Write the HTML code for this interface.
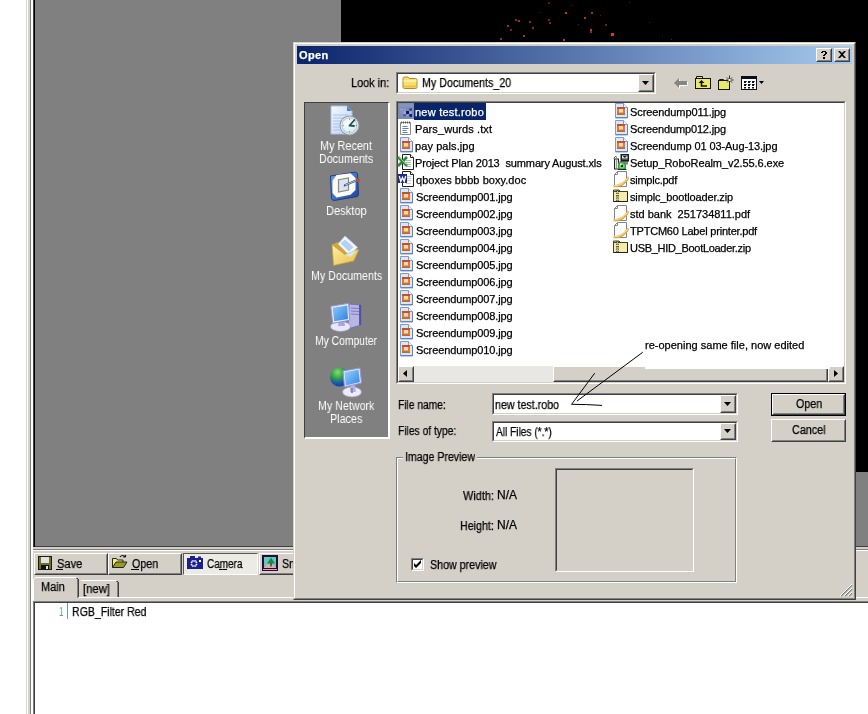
<!DOCTYPE html>
<html><head><meta charset="utf-8"><title>Open</title>
<style>
html,body{margin:0;padding:0;}
body{width:868px;height:714px;overflow:hidden;background:#fff;position:relative;font-family:"Liberation Sans",sans-serif;font-size:11px;color:#000;}
.a{position:absolute;}
svg.a{overflow:visible;}
.t{position:absolute;white-space:nowrap;line-height:13px;height:13px;will-change:transform;-webkit-text-stroke:0.25px;}
.face{background:#d4d0c8;}
.btn{position:absolute;background:#d4d0c8;box-sizing:border-box;border:1px solid;border-color:#fff #404040 #404040 #fff;}
.btn:before{content:"";position:absolute;left:0;top:0;right:0;bottom:0;border:1px solid;border-color:#d4d0c8 #808080 #808080 #d4d0c8;}
.sunk{position:absolute;box-sizing:border-box;border:1px solid;border-color:#808080 #fff #fff #808080;background:#fff;}
.sunk:before{content:"";position:absolute;left:0;top:0;right:0;bottom:0;border:1px solid;border-color:#404040 #d4d0c8 #d4d0c8 #404040;}
.dith{background:#e9e7e3;}
u{text-decoration:none;border-bottom:1px solid #000;}
</style></head><body>
<div class="a" style="left:26px;top:0px;width:1px;height:714px;background:#d8d8d0;"></div>
<div class="a" style="left:28px;top:0px;width:2px;height:714px;background:#d4d0c8;"></div>
<div class="a" style="left:30px;top:0px;width:1px;height:714px;background:#808080;"></div>
<div class="a" style="left:33px;top:0px;width:835px;height:546px;background:#808080;"></div>
<div class="a" style="left:33px;top:0px;width:1px;height:547px;background:#404040;"></div>
<div class="a" style="left:34px;top:0px;width:1px;height:547px;background:#000;"></div>
<div class="a" style="left:341px;top:0px;width:527px;height:472px;background:#000;"></div>
<div class="a" style="left:35px;top:546px;width:833px;height:1px;background:#404040;"></div>
<div class="a" style="left:565px;top:12px;width:2px;height:2px;background:#c03828;"></div>
<div class="a" style="left:591px;top:12px;width:2px;height:2px;background:#a83020;"></div>
<div class="a" style="left:584px;top:17px;width:2px;height:2px;background:#b03424;"></div>
<div class="a" style="left:590px;top:29px;width:2px;height:2px;background:#c03828;"></div>
<div class="a" style="left:590px;top:31px;width:2px;height:2px;background:#902818;"></div>
<div class="a" style="left:611px;top:33px;width:3px;height:3px;background:#d04030;"></div>
<div class="a" style="left:515px;top:19px;width:2px;height:2px;background:#902818;"></div>
<div class="a" style="left:518px;top:20px;width:2px;height:2px;background:#a03020;"></div>
<div class="a" style="left:507px;top:25px;width:2px;height:2px;background:#a03020;"></div>
<div class="a" style="left:510px;top:29px;width:2px;height:2px;background:#802010;"></div>
<div class="a" style="left:529px;top:21px;width:2px;height:2px;background:#902818;"></div>
<div class="a" style="left:532px;top:27px;width:2px;height:2px;background:#902818;"></div>
<div class="a" style="left:548px;top:19px;width:2px;height:2px;background:#802010;"></div>
<div class="a" style="left:549px;top:22px;width:2px;height:2px;background:#802010;"></div>
<div class="a" style="left:523px;top:35px;width:2px;height:2px;background:#a04020;"></div>
<div class="a" style="left:500px;top:38px;width:2px;height:2px;background:#903020;"></div>
<div class="a" style="left:563px;top:39px;width:2px;height:2px;background:#a04828;"></div>
<div class="a" style="left:548px;top:2px;width:2px;height:2px;background:#601808;"></div>
<div class="a" style="left:605px;top:24px;width:2px;height:2px;background:#702010;"></div>
<div class="a" style="left:629px;top:2px;width:1px;height:1px;background:#501808;"></div>
<div class="a" style="left:671px;top:39px;width:1px;height:1px;background:#602010;"></div>
<div class="a" style="left:662px;top:36px;width:1px;height:1px;background:#501808;"></div>
<div class="a" style="left:649px;top:22px;width:1px;height:1px;background:#501808;"></div>
<div class="a" style="left:571px;top:5px;width:1px;height:1px;background:#601808;"></div>
<div class="a" style="left:540px;top:12px;width:1px;height:1px;background:#501808;"></div>
<div class="a" style="left:600px;top:15px;width:1px;height:1px;background:#601808;"></div>
<div class="a" style="left:578px;top:24px;width:1px;height:1px;background:#601808;"></div>
<div class="a" style="left:33px;top:547px;width:835px;height:54px;background:#d4d0c8;"></div>
<div class="a" style="left:33px;top:549px;width:835px;height:1px;background:#808080;"></div>
<div class="a" style="left:33px;top:550px;width:835px;height:1px;background:#fff;"></div>
<div class="btn" style="left:34px;top:553px;width:74px;height:22px"></div>
<div class="btn" style="left:108px;top:553px;width:74px;height:22px"></div>
<div class="a" style="left:183px;top:553px;width:75px;height:22px;box-sizing:border-box;background:#edebe6;border:1px solid;border-color:#585858 #fff #fff #585858;"></div>
<div class="btn" style="left:259px;top:553px;width:74px;height:22px"></div>
<svg class="a" style="left:38px;top:555px;" width="16" height="16" viewBox="0 0 16 16"><rect x="0" y="1" width="14" height="14" fill="#1a1a1a"/><rect x="1" y="2" width="12" height="12" fill="#6d7224"/><rect x="3" y="2" width="8" height="6" fill="#e4e2dc"/><rect x="3" y="10" width="8" height="4" fill="#111"/><rect x="8" y="11" width="2" height="3" fill="#e4e2dc"/></svg>
<svg class="a" style="left:112px;top:554px;" width="16" height="16" viewBox="0 0 16 16"><path d="M.5 13.500v-9h4l1 1.500h5.500v2" fill="#f4ee7a" stroke="#222"/><path d="M.5 13.500l3.500-5.500h11l-3.500 5.500z" fill="#9a9c22" stroke="#222"/><path d="M8 3c1.500-2 4-2 5.500 0M13.500 3v-2M13.500 3h-2.300" fill="none" stroke="#111" stroke-width="1.100"/></svg>
<svg class="a" style="left:187px;top:555px;" width="16" height="16" viewBox="0 0 16 16"><rect x="0" y="3" width="16" height="11" fill="#1c1f8c"/><rect x="3" y="1" width="5" height="3" fill="#1c1f8c"/><rect x="11" y="1.500" width="3" height="2" fill="#1c1f8c"/><circle cx="7" cy="8.500" r="3.400" fill="#fff"/><circle cx="7" cy="8.500" r="1.700" fill="#1c1f8c"/><path d="M7 4.500v8M3 8.500h8M4.200 5.700l5.600 5.600M9.800 5.700l-5.600 5.600" stroke="#1c1f8c" stroke-width=".8"/><rect x="12" y="5" width="2" height="2" fill="#fff"/></svg>
<svg class="a" style="left:262px;top:555px;" width="16" height="16" viewBox="0 0 16 16"><rect x="0" y="0" width="16" height="16" fill="#2a0a30"/><rect x="2" y="2" width="12" height="11" fill="#5ec9c4"/><path d="M2 13l4-5 3 3 2-2 3 4z" fill="#e7a9a0"/><path d="M9 2.500l4 6h-8z" fill="#1e8a3c"/><rect x="8.300" y="8" width="1.400" height="3.500" fill="#165c28"/><rect x="1" y="14" width="14" height="1" fill="#d9a0c8"/></svg>
<div class="t" style="left:56.54px;top:558.04px;color:#000;font-size:12px;letter-spacing:0.000px;transform:scaleX(0.9230);transform-origin:0 0;">Save</div>
<div class="t" style="left:131.51px;top:558.04px;color:#000;font-size:12px;letter-spacing:0.000px;transform:scaleX(0.8918);transform-origin:0 0;">Open</div>
<div class="t" style="left:206.50px;top:558.04px;color:#000;font-size:12px;letter-spacing:0.000px;transform:scaleX(0.8312);transform-origin:0 0;">Camera</div>
<div class="t" style="left:281.56px;top:558.04px;color:#000;font-size:12px;letter-spacing:0.000px;transform:scaleX(0.8872);transform-origin:0 0;">Snap</div>
<div class="a" style="left:56px;top:569px;width:7px;height:1px;background:#000;"></div>
<div class="a" style="left:131px;top:569px;width:8px;height:1px;background:#000;"></div>
<div class="a" style="left:219px;top:569px;width:8px;height:1px;background:#000;"></div>
<div class="a" style="left:79px;top:597px;width:789px;height:1px;background:#fff;"></div>
<div class="a" style="left:33px;top:579px;width:1px;height:22px;background:#fff;"></div>
<div class="a" style="left:34px;top:578px;width:1px;height:1px;background:#fff;"></div>
<div class="a" style="left:35px;top:577px;width:41px;height:1px;background:#fff;"></div>
<div class="a" style="left:76px;top:578px;width:1px;height:1px;background:#808080;"></div>
<div class="a" style="left:77px;top:579px;width:1px;height:19px;background:#808080;"></div>
<div class="a" style="left:77px;top:578px;width:1px;height:1px;background:#404040;"></div>
<div class="a" style="left:78px;top:579px;width:1px;height:18px;background:#404040;"></div>
<div class="a" style="left:81px;top:580px;width:35px;height:1px;background:#fff;"></div>
<div class="a" style="left:116px;top:581px;width:1px;height:1px;background:#808080;"></div>
<div class="a" style="left:117px;top:582px;width:1px;height:15px;background:#808080;"></div>
<div class="a" style="left:117px;top:581px;width:1px;height:1px;background:#404040;"></div>
<div class="a" style="left:118px;top:582px;width:1px;height:15px;background:#404040;"></div>
<div class="t" style="left:41.13px;top:581.04px;color:#000;font-size:12px;letter-spacing:0.000px;transform:scaleX(0.9141);transform-origin:0 0;">Main</div>
<div class="t" style="left:83.20px;top:583.04px;color:#000;font-size:12px;letter-spacing:0.000px;transform:scaleX(0.9408);transform-origin:0 0;">[new]</div>
<div class="a" style="left:33px;top:601px;width:835px;height:1px;background:#808080;"></div>
<div class="a" style="left:34px;top:602px;width:834px;height:1px;background:#404040;"></div>
<div class="a" style="left:33px;top:601px;width:1px;height:113px;background:#808080;"></div>
<div class="a" style="left:34px;top:602px;width:1px;height:112px;background:#404040;"></div>
<div class="t" style="left:59.41px;top:606.04px;color:#5a9cb8;font-size:12px;letter-spacing:0.000px;transform:scaleX(0.6538);transform-origin:0 0;-webkit-text-stroke:0;">1</div>
<div class="a" style="left:67px;top:603px;width:1px;height:16px;background:#6a9cb0;"></div>
<div class="t" style="left:72.16px;top:606.04px;color:#000;font-size:12px;letter-spacing:0.000px;transform:scaleX(0.8793);transform-origin:0 0;">RGB_Filter Red</div>
<div class="a face" style="left:293px;top:42px;width:563px;height:558px;box-sizing:border-box;border:1px solid;border-color:#d4d0c8 #404040 #404040 #d4d0c8;"><div class="a" style="left:0;top:0;right:0;bottom:0;border:1px solid;border-color:#fff #808080 #808080 #fff"></div></div>
<div class="a" style="left:297px;top:46px;width:555px;height:18px;background:linear-gradient(90deg,#0a246a,#a6caf0)"></div>
<div class="t" style="left:298.55px;top:48.69px;color:#fff;font-size:11px;letter-spacing:0.369px;font-weight:bold;">Open</div>
<div class="btn" style="left:816px;top:48px;width:16px;height:14px"></div>
<div class="btn" style="left:834px;top:48px;width:16px;height:14px"></div>
<svg class="a" style="left:816px;top:48px" width="16" height="14" viewBox="0 0 16 14"><path d="M5 4h1v-1h4v1h1v2h-1v1h-1v1h-2v-1h1v-1h1v-2h-2v1h-2zM7 9h2v2h-2z" fill="#000"/></svg>
<svg class="a" style="left:834px;top:48px" width="16" height="14" viewBox="0 0 16 14"><path d="M4 3h2l2 2 2-2h2l-3 3.500 3 3.500h-2l-2-2-2 2h-2l3-3.500z" fill="#000"/></svg>
<div class="t" style="left:351.14px;top:77.04px;color:#000;font-size:12px;letter-spacing:0.000px;transform:scaleX(0.9101);transform-origin:0 0;">Look in:</div>
<div class="sunk" style="left:396px;top:72px;width:260px;height:22px"></div>
<svg class="a" style="left:402px;top:74px;" width="16" height="16" viewBox="0 0 16 16"><path d="M1 4.500c0-1 .5-1.500 1.500-1.500h3.500l1.500 1.500h6c1 0 1.500.5 1.500 1.500v7c0 1-.5 1.500-1.500 1.500h-11c-1 0-1.500-.5-1.500-1.500z" fill="#f7dd72" stroke="#b08d1e"/><path d="M1.500 7h13" stroke="#fff3b0" stroke-width="1.500"/><path d="M2 12.500h12" stroke="#e9c443" stroke-width="2"/></svg>
<div class="t" style="left:422.15px;top:77.04px;color:#000;font-size:12px;letter-spacing:0.000px;transform:scaleX(0.8919);transform-origin:0 0;">My Documents_20</div>
<div class="btn" style="left:638px;top:74px;width:16px;height:18px"></div><svg class="a" style="left:642px;top:81px" width="7" height="4" viewBox="0 0 7 4"><path d="M0 0h7l-3.500 4z" fill="#000"/></svg>
<svg class="a" style="left:674px;top:76px;" width="14" height="14" viewBox="0 0 14 14"><path d="M1 8L6 3V6H14V10H6V13Z" fill="#fff"/><path d="M0 7L5 2V5H13V9H5V12Z" fill="#868680"/></svg>
<svg class="a" style="left:695px;top:75px;" width="16" height="16" viewBox="0 0 16 16"><path d="M1.500 3.500V1.500H7.500V3.500" fill="#e8e86c" stroke="#111"/><rect x=".5" y="3.500" width="15" height="10" fill="#e8e86c" stroke="#111"/><path d="M3.500 8L6.500 5L9.500 8Z" fill="#111"/><path d="M6.500 7.500V11H12" fill="none" stroke="#111" stroke-width="1.600"/></svg>
<svg class="a" style="left:718px;top:75px;" width="16" height="16" viewBox="0 0 16 16"><path d="M1.500 5.500V4.500H5.500L6.500 5.500" fill="#e8e86c" stroke="#111"/><rect x=".5" y="5.500" width="11" height="9" fill="#e8e86c" stroke="#111"/><path d="M11.500 .5V9M8 5H15.500M9 2.500L14 7.500M14 2.500L9 7.500" stroke="#222" stroke-width=".9"/><rect x="10.500" y="4" width="2" height="2" fill="#fff"/></svg>
<svg class="a" style="left:741px;top:75px;" width="16" height="16" viewBox="0 0 16 16"><rect x=".5" y="1.500" width="15" height="13" fill="#fff" stroke="#111"/><rect x="0" y="1" width="16" height="3" fill="#0c0c20"/><g fill="#111"><rect x="3" y="6" width="2" height="2"/><rect x="7" y="6" width="2" height="2"/><rect x="11" y="6" width="2" height="2"/><rect x="3" y="9" width="2" height="2"/><rect x="7" y="9" width="2" height="2"/><rect x="11" y="9" width="2" height="2"/><rect x="3" y="12" width="2" height="1.500"/><rect x="7" y="12" width="2" height="1.500"/><rect x="11" y="12" width="2" height="1.500"/></g><g fill="#3a5ad8"><rect x="5" y="6" width="1" height="1"/><rect x="9" y="6" width="1" height="1"/><rect x="13" y="6" width="1" height="1"/><rect x="5" y="9" width="1" height="1"/><rect x="9" y="9" width="1" height="1"/><rect x="13" y="9" width="1" height="1"/></g></svg>
<svg class="a" style="left:759px;top:81px" width="5" height="3" viewBox="0 0 5 3"><path d="M0 0h5l-2.500 3z" fill="#000"/></svg>
<div class="a" style="left:304px;top:102px;width:86px;height:337px;box-sizing:border-box;background:#808080;border-style:solid;border-width:1px 2px 2px 1px;border-color:#404040 #fff #fff #404040"></div>
<svg class="a" style="left:330px;top:105px;" width="32" height="32" viewBox="0 0 32 32"><defs><linearGradient id="gpg" x1="0" y1="0" x2="1" y2="1"><stop offset="0" stop-color="#f4f8ff"/><stop offset="1" stop-color="#b9d0f4"/></linearGradient><radialGradient id="gck" cx=".4" cy=".35" r=".7"><stop offset="0" stop-color="#ffffff"/><stop offset="1" stop-color="#cfe6ee"/></radialGradient></defs>
<path d="M1 1h16l5 5v23h-21z" fill="url(#gpg)" stroke="#a9c0e6" stroke-width="1"/><path d="M17 1l5 5h-5z" fill="#4f7fd0"/><path d="M3 10h15M3 13h15M3 16h12M3 19h10M3 22h9M3 25h10" stroke="#a7c4f0" stroke-width="1"/>
<circle cx="19.500" cy="20.500" r="10" fill="#8f9aa4"/><circle cx="19.500" cy="20.500" r="9" fill="#e9eef0"/><circle cx="19.500" cy="20.500" r="7.600" fill="url(#gck)" stroke="#9aa6ae" stroke-width=".6"/><path d="M19.500 20.500l5-5.500M19.500 20.500l4.500.5" stroke="#1f5050" stroke-width="1.800" stroke-linecap="round"/><path d="M19.500 13.500v1.500M19.500 26v1.500M12.500 20.500h1.500M25.500 20.500h1.500" stroke="#8aa" stroke-width="1"/></svg>
<div class="t" style="left:320.14px;top:140.04px;color:#fff;font-size:12px;letter-spacing:0.000px;transform:scaleX(0.9056);transform-origin:0 0;-webkit-text-stroke:0;">My Recent</div>
<div class="t" style="left:319.15px;top:153.04px;color:#fff;font-size:12px;letter-spacing:0.000px;transform:scaleX(0.8931);transform-origin:0 0;-webkit-text-stroke:0;">Documents</div>
<svg class="a" style="left:330px;top:170px;" width="32" height="32" viewBox="0 0 32 32"><defs><linearGradient id="gds" x1="0" y1="0" x2="1" y2="1"><stop offset="0" stop-color="#6fa5ee"/><stop offset="1" stop-color="#1a3f9c"/></linearGradient></defs><g transform="translate(-0.5,1.3) scale(1,0.94)">
<path d="M1 5l24-4c2 0 3 1 3 2l1 21c0 2-1 3-2 3l-22 4c-2 0-3-1-3-2z" fill="url(#gds)" stroke="#173a8a" stroke-width="1"/>
<path d="M7 4l14-2 5 5v13l-5 5-14 3-4-5v-13z" fill="#fbfbf2"/><path d="M9 9l10-2v13l-10 2z" fill="#d6e4f6" stroke="#8a8a7a" stroke-width="1.200"/><path d="M15 15l11-5" stroke="#2a4c8c" stroke-width="2.200"/><path d="M15 15l11-5" stroke="#dfe9f8" stroke-width=".8"/><circle cx="28.500" cy="9.500" r="2" fill="#b4522e"/><path d="M14 16l2-.2-1-1.300z" fill="#111"/></g></svg>
<div class="t" style="left:326.12px;top:205.04px;color:#fff;font-size:12px;letter-spacing:0.000px;transform:scaleX(0.9249);transform-origin:0 0;-webkit-text-stroke:0;">Desktop</div>
<svg class="a" style="left:330px;top:235px;" width="32" height="32" viewBox="0 0 32 32"><defs><linearGradient id="gmd" x1="0" y1="0" x2="1" y2="1"><stop offset="0" stop-color="#fdf0a8"/><stop offset="1" stop-color="#e9bd45"/></linearGradient></defs>
<path d="M2 9.500l6-2.500 8 5 13 2.500-5 11.500-20.500 4.500z" fill="#d2a634"/>
<path d="M15 1l12.500 11.300-8 8.200-11.500-11.500z" fill="#f2f7ff" stroke="#b4c8e8" stroke-width=".8"/><path d="M15 4.500l8.500 7.500-4.500 4.500-8.500-8z" fill="#b5d0f5"/>
<path d="M2 9.500L15 19.500 29 14.500 23.700 26 3.500 30.500z" fill="url(#gmd)" stroke="#c09a2c" stroke-width=".7"/><path d="M15 19.500l5.500 2.500 7-7z" fill="#d4e8f0"/></svg>
<div class="t" style="left:311.15px;top:270.04px;color:#fff;font-size:12px;letter-spacing:0.000px;transform:scaleX(0.8898);transform-origin:0 0;-webkit-text-stroke:0;">My Documents</div>
<svg class="a" style="left:330px;top:300px;" width="32" height="32" viewBox="0 0 32 32"><defs><linearGradient id="gsc" x1="0" y1="0" x2="1" y2="1"><stop offset="0" stop-color="#8ccbf8"/><stop offset="1" stop-color="#2f7fe0"/></linearGradient></defs>
<path d="M19 4l12 1v20l-10 3-3-2z" fill="#b9b6e4" stroke="#6b67b8" stroke-width=".8"/><path d="M21 8l8 .5M21 11l8 .5M21 14l8 .5" stroke="#7f7ac8" stroke-width="1.200"/><path d="M30 5v20" stroke="#3a3a8a" stroke-width="1.500"/>
<ellipse cx="10.500" cy="26.500" rx="10" ry="5" fill="#e9e6f6" stroke="#9a96cc" stroke-width=".8"/><path d="M9 20h5l1 6h-7z" fill="#a9a6da"/>
<g transform="translate(-.3,1.300)"><path d="M1 5l18-3 1 17-17 3z" fill="#e6e9f8" stroke="#8f96cc" stroke-width="1"/><path d="M3 6.500l14.500-2.300.8 13.500-13.800 2.300z" fill="url(#gsc)"/></g></svg>
<div class="t" style="left:315.18px;top:335.04px;color:#fff;font-size:12px;letter-spacing:0.000px;transform:scaleX(0.8607);transform-origin:0 0;-webkit-text-stroke:0;">My Computer</div>
<svg class="a" style="left:330px;top:365px;" width="32" height="32" viewBox="0 0 32 32"><defs><radialGradient id="ggl" cx=".4" cy=".25" r=".8"><stop offset="0" stop-color="#7fe06a"/><stop offset=".45" stop-color="#2f9a4a"/><stop offset=".75" stop-color="#1c4fb8"/><stop offset="1" stop-color="#123a96"/></radialGradient><linearGradient id="gnw" x1="0" y1="0" x2="1" y2="1"><stop offset="0" stop-color="#9ad0fa"/><stop offset="1" stop-color="#2f86e4"/></linearGradient></defs>
<circle cx="9.500" cy="12" r="9.500" fill="url(#ggl)"/>
<ellipse cx="22" cy="27" rx="9.500" ry="5" fill="#eeeaf6" stroke="#a6a0d0" stroke-width=".8"/><path d="M20 20h5l1 7h-6z" fill="#b6b2e0"/><path d="M22 23v5" stroke="#8a86c8" stroke-width="2"/>
<path d="M13 6l17-3 1.500 15-17 4z" fill="#dfe6fa" stroke="#8f96d0" stroke-width="1"/><path d="M14.500 7.300l14-2.500 1.300 12.300-14 3.300z" fill="url(#gnw)"/></svg>
<div class="t" style="left:318.15px;top:400.04px;color:#fff;font-size:12px;letter-spacing:0.000px;transform:scaleX(0.8905);transform-origin:0 0;-webkit-text-stroke:0;">My Network</div>
<div class="t" style="left:330.14px;top:413.04px;color:#fff;font-size:12px;letter-spacing:0.000px;transform:scaleX(0.9000);transform-origin:0 0;-webkit-text-stroke:0;">Places</div>
<div class="sunk" style="left:396px;top:101px;width:450px;height:283px"></div>
<div class="a" style="left:414px;top:103px;width:72px;height:17px;background:#0a246a;"></div>
<svg class="a" style="left:398px;top:103px;" width="16" height="16" viewBox="0 0 16 16"><rect x="0" y="0" width="16" height="16" fill="#7d8cb5"/><rect x="1" y="1" width="14" height="3" fill="#8493bb"/><rect x="2.400" y="5.600" width="2.400" height="2" fill="#99a5c9"/><rect x="5.600" y="5.600" width="2.400" height="2" fill="#8e9ac4"/><rect x="11.300" y="5.400" width="2.600" height="2.300" fill="#2c3c82"/><rect x="5.400" y="8.300" width="2.600" height="2.600" fill="#aaa6d6"/><rect x="8" y="8" width="3" height="3" fill="#0c1a6a"/><rect x="11.300" y="8.300" width="2.400" height="2.400" fill="#a4a6dc"/><rect x="5.300" y="11.200" width="2.500" height="2.300" fill="#4c5c9a"/><rect x="11.300" y="11.100" width="2.700" height="2.700" fill="#0c1a6a"/><rect x="8.300" y="11.300" width="2.400" height="2.200" fill="#8c98c4"/><rect x="2.400" y="8.400" width="2.300" height="2.200" fill="#8896be"/></svg>
<div class="t" style="left:415.30px;top:105.69px;color:#fff;font-size:11px;letter-spacing:0.232px;white-space:pre;">new test.robo</div>
<svg class="a" style="left:398px;top:120px;" width="16" height="16" viewBox="0 0 16 16"><path d="M2.5 2.5h10v12h-10z" fill="#fff" stroke="#8a8a8a"/><path d="M3 2.5h9" stroke="#555" stroke-dasharray="1 1" stroke-width="2"/><path d="M4.5 6.5h5M4.5 8.5h6M4.5 10.5h4M4.5 12.5h5" stroke="#5b7fc0"/></svg>
<div class="t" style="left:415.10px;top:122.69px;color:#000;font-size:11px;letter-spacing:0.082px;white-space:pre;">Pars_wurds .txt</div>
<svg class="a" style="left:398px;top:137px;" width="16" height="16" viewBox="0 0 16 16"><path d="M2.500 .500h8l4 4v10.500h-12z" fill="#dbe6f7" stroke="#7d9bd0"/><path d="M10.500 .500v4h4" fill="#f3f7fd" stroke="#7d9bd0"/><path d="M14.500 5v10M3 14.500h12" stroke="#5f83c4"/><rect x="4" y="4" width="8" height="8" fill="#e07a38"/><rect x="4" y="4" width="8" height="2" fill="#c6502a"/><rect x="6" y="6" width="4" height="3.500" fill="#f6dcae"/><rect x="4" y="10.500" width="8" height="1.500" fill="#b86a3a"/></svg>
<div class="t" style="left:415.30px;top:139.69px;color:#000;font-size:11px;letter-spacing:0.087px;white-space:pre;">pay pals.jpg</div>
<svg class="a" style="left:398px;top:154px;" width="16" height="16" viewBox="0 0 16 16"><path d="M4.500 .500h8l3 3v12h-11z" fill="#fff" stroke="#222"/><path d="M12.500 .500v3h3" fill="#fff" stroke="#222"/><path d="M8 6.500h5M8 8.500h5M8 10.500h5M8 12.500h5" stroke="#9fc79f"/><path d="M0 3l9 9M9 3l-9 9" stroke="#2e8b3a" stroke-width="2.600"/><path d="M.5 2.500l8 8" stroke="#8fd08f" stroke-width="1"/></svg>
<div class="t" style="left:415.10px;top:156.69px;color:#000;font-size:11px;letter-spacing:-0.131px;white-space:pre;">Project Plan 2013  summary August.xls</div>
<svg class="a" style="left:398px;top:171px;" width="16" height="16" viewBox="0 0 16 16"><path d="M4.500 .500h8l3 3v12h-11z" fill="#fff" stroke="#222"/><path d="M12.500 .500v3h3" fill="#fff" stroke="#222"/><path d="M8 5.500h5M8 7.500h5M8 9.500h5M8 12.500h5" stroke="#c8c8d8"/><rect x="0" y="3" width="9" height="9" fill="#1c2a8c"/><path d="M1.300 5l1.500 5.500 1.700-4 1.700 4 1.500-5.500" fill="none" stroke="#fff" stroke-width="1.300"/></svg>
<div class="t" style="left:415.55px;top:173.69px;color:#000;font-size:11px;letter-spacing:0.049px;white-space:pre;">qboxes bbbb boxy.doc</div>
<svg class="a" style="left:398px;top:188px;" width="16" height="16" viewBox="0 0 16 16"><path d="M2.500 .500h8l4 4v10.500h-12z" fill="#dbe6f7" stroke="#7d9bd0"/><path d="M10.500 .500v4h4" fill="#f3f7fd" stroke="#7d9bd0"/><path d="M14.500 5v10M3 14.500h12" stroke="#5f83c4"/><rect x="4" y="4" width="8" height="8" fill="#e07a38"/><rect x="4" y="4" width="8" height="2" fill="#c6502a"/><rect x="6" y="6" width="4" height="3.500" fill="#f6dcae"/><rect x="4" y="10.500" width="8" height="1.500" fill="#b86a3a"/></svg>
<div class="t" style="left:415.55px;top:190.69px;color:#000;font-size:11px;letter-spacing:-0.115px;white-space:pre;">Screendump001.jpg</div>
<svg class="a" style="left:398px;top:205px;" width="16" height="16" viewBox="0 0 16 16"><path d="M2.500 .500h8l4 4v10.500h-12z" fill="#dbe6f7" stroke="#7d9bd0"/><path d="M10.500 .500v4h4" fill="#f3f7fd" stroke="#7d9bd0"/><path d="M14.500 5v10M3 14.500h12" stroke="#5f83c4"/><rect x="4" y="4" width="8" height="8" fill="#e07a38"/><rect x="4" y="4" width="8" height="2" fill="#c6502a"/><rect x="6" y="6" width="4" height="3.500" fill="#f6dcae"/><rect x="4" y="10.500" width="8" height="1.500" fill="#b86a3a"/></svg>
<div class="t" style="left:415.55px;top:207.69px;color:#000;font-size:11px;letter-spacing:-0.115px;white-space:pre;">Screendump002.jpg</div>
<svg class="a" style="left:398px;top:222px;" width="16" height="16" viewBox="0 0 16 16"><path d="M2.500 .500h8l4 4v10.500h-12z" fill="#dbe6f7" stroke="#7d9bd0"/><path d="M10.500 .500v4h4" fill="#f3f7fd" stroke="#7d9bd0"/><path d="M14.500 5v10M3 14.500h12" stroke="#5f83c4"/><rect x="4" y="4" width="8" height="8" fill="#e07a38"/><rect x="4" y="4" width="8" height="2" fill="#c6502a"/><rect x="6" y="6" width="4" height="3.500" fill="#f6dcae"/><rect x="4" y="10.500" width="8" height="1.500" fill="#b86a3a"/></svg>
<div class="t" style="left:415.55px;top:224.69px;color:#000;font-size:11px;letter-spacing:-0.115px;white-space:pre;">Screendump003.jpg</div>
<svg class="a" style="left:398px;top:239px;" width="16" height="16" viewBox="0 0 16 16"><path d="M2.500 .500h8l4 4v10.500h-12z" fill="#dbe6f7" stroke="#7d9bd0"/><path d="M10.500 .500v4h4" fill="#f3f7fd" stroke="#7d9bd0"/><path d="M14.500 5v10M3 14.500h12" stroke="#5f83c4"/><rect x="4" y="4" width="8" height="8" fill="#e07a38"/><rect x="4" y="4" width="8" height="2" fill="#c6502a"/><rect x="6" y="6" width="4" height="3.500" fill="#f6dcae"/><rect x="4" y="10.500" width="8" height="1.500" fill="#b86a3a"/></svg>
<div class="t" style="left:415.55px;top:241.69px;color:#000;font-size:11px;letter-spacing:-0.115px;white-space:pre;">Screendump004.jpg</div>
<svg class="a" style="left:398px;top:256px;" width="16" height="16" viewBox="0 0 16 16"><path d="M2.500 .500h8l4 4v10.500h-12z" fill="#dbe6f7" stroke="#7d9bd0"/><path d="M10.500 .500v4h4" fill="#f3f7fd" stroke="#7d9bd0"/><path d="M14.500 5v10M3 14.500h12" stroke="#5f83c4"/><rect x="4" y="4" width="8" height="8" fill="#e07a38"/><rect x="4" y="4" width="8" height="2" fill="#c6502a"/><rect x="6" y="6" width="4" height="3.500" fill="#f6dcae"/><rect x="4" y="10.500" width="8" height="1.500" fill="#b86a3a"/></svg>
<div class="t" style="left:415.55px;top:258.69px;color:#000;font-size:11px;letter-spacing:-0.115px;white-space:pre;">Screendump005.jpg</div>
<svg class="a" style="left:398px;top:273px;" width="16" height="16" viewBox="0 0 16 16"><path d="M2.500 .500h8l4 4v10.500h-12z" fill="#dbe6f7" stroke="#7d9bd0"/><path d="M10.500 .500v4h4" fill="#f3f7fd" stroke="#7d9bd0"/><path d="M14.500 5v10M3 14.500h12" stroke="#5f83c4"/><rect x="4" y="4" width="8" height="8" fill="#e07a38"/><rect x="4" y="4" width="8" height="2" fill="#c6502a"/><rect x="6" y="6" width="4" height="3.500" fill="#f6dcae"/><rect x="4" y="10.500" width="8" height="1.500" fill="#b86a3a"/></svg>
<div class="t" style="left:415.55px;top:275.69px;color:#000;font-size:11px;letter-spacing:-0.115px;white-space:pre;">Screendump006.jpg</div>
<svg class="a" style="left:398px;top:290px;" width="16" height="16" viewBox="0 0 16 16"><path d="M2.500 .500h8l4 4v10.500h-12z" fill="#dbe6f7" stroke="#7d9bd0"/><path d="M10.500 .500v4h4" fill="#f3f7fd" stroke="#7d9bd0"/><path d="M14.500 5v10M3 14.500h12" stroke="#5f83c4"/><rect x="4" y="4" width="8" height="8" fill="#e07a38"/><rect x="4" y="4" width="8" height="2" fill="#c6502a"/><rect x="6" y="6" width="4" height="3.500" fill="#f6dcae"/><rect x="4" y="10.500" width="8" height="1.500" fill="#b86a3a"/></svg>
<div class="t" style="left:415.55px;top:292.69px;color:#000;font-size:11px;letter-spacing:-0.115px;white-space:pre;">Screendump007.jpg</div>
<svg class="a" style="left:398px;top:307px;" width="16" height="16" viewBox="0 0 16 16"><path d="M2.500 .500h8l4 4v10.500h-12z" fill="#dbe6f7" stroke="#7d9bd0"/><path d="M10.500 .500v4h4" fill="#f3f7fd" stroke="#7d9bd0"/><path d="M14.500 5v10M3 14.500h12" stroke="#5f83c4"/><rect x="4" y="4" width="8" height="8" fill="#e07a38"/><rect x="4" y="4" width="8" height="2" fill="#c6502a"/><rect x="6" y="6" width="4" height="3.500" fill="#f6dcae"/><rect x="4" y="10.500" width="8" height="1.500" fill="#b86a3a"/></svg>
<div class="t" style="left:415.55px;top:309.69px;color:#000;font-size:11px;letter-spacing:-0.115px;white-space:pre;">Screendump008.jpg</div>
<svg class="a" style="left:398px;top:324px;" width="16" height="16" viewBox="0 0 16 16"><path d="M2.500 .500h8l4 4v10.500h-12z" fill="#dbe6f7" stroke="#7d9bd0"/><path d="M10.500 .500v4h4" fill="#f3f7fd" stroke="#7d9bd0"/><path d="M14.500 5v10M3 14.500h12" stroke="#5f83c4"/><rect x="4" y="4" width="8" height="8" fill="#e07a38"/><rect x="4" y="4" width="8" height="2" fill="#c6502a"/><rect x="6" y="6" width="4" height="3.500" fill="#f6dcae"/><rect x="4" y="10.500" width="8" height="1.500" fill="#b86a3a"/></svg>
<div class="t" style="left:415.55px;top:326.69px;color:#000;font-size:11px;letter-spacing:-0.115px;white-space:pre;">Screendump009.jpg</div>
<svg class="a" style="left:398px;top:341px;" width="16" height="16" viewBox="0 0 16 16"><path d="M2.500 .500h8l4 4v10.500h-12z" fill="#dbe6f7" stroke="#7d9bd0"/><path d="M10.500 .500v4h4" fill="#f3f7fd" stroke="#7d9bd0"/><path d="M14.500 5v10M3 14.500h12" stroke="#5f83c4"/><rect x="4" y="4" width="8" height="8" fill="#e07a38"/><rect x="4" y="4" width="8" height="2" fill="#c6502a"/><rect x="6" y="6" width="4" height="3.500" fill="#f6dcae"/><rect x="4" y="10.500" width="8" height="1.500" fill="#b86a3a"/></svg>
<div class="t" style="left:415.55px;top:343.69px;color:#000;font-size:11px;letter-spacing:-0.115px;white-space:pre;">Screendump010.jpg</div>
<svg class="a" style="left:613px;top:103px;" width="16" height="16" viewBox="0 0 16 16"><path d="M2.500 .500h8l4 4v10.500h-12z" fill="#dbe6f7" stroke="#7d9bd0"/><path d="M10.500 .500v4h4" fill="#f3f7fd" stroke="#7d9bd0"/><path d="M14.500 5v10M3 14.500h12" stroke="#5f83c4"/><rect x="4" y="4" width="8" height="8" fill="#e07a38"/><rect x="4" y="4" width="8" height="2" fill="#c6502a"/><rect x="6" y="6" width="4" height="3.500" fill="#f6dcae"/><rect x="4" y="10.500" width="8" height="1.500" fill="#b86a3a"/></svg>
<div class="t" style="left:629.85px;top:105.69px;color:#000;font-size:11px;letter-spacing:-0.095px;white-space:pre;">Screendump011.jpg</div>
<svg class="a" style="left:613px;top:120px;" width="16" height="16" viewBox="0 0 16 16"><path d="M2.500 .500h8l4 4v10.500h-12z" fill="#dbe6f7" stroke="#7d9bd0"/><path d="M10.500 .500v4h4" fill="#f3f7fd" stroke="#7d9bd0"/><path d="M14.500 5v10M3 14.500h12" stroke="#5f83c4"/><rect x="4" y="4" width="8" height="8" fill="#e07a38"/><rect x="4" y="4" width="8" height="2" fill="#c6502a"/><rect x="6" y="6" width="4" height="3.500" fill="#f6dcae"/><rect x="4" y="10.500" width="8" height="1.500" fill="#b86a3a"/></svg>
<div class="t" style="left:629.85px;top:122.69px;color:#000;font-size:11px;letter-spacing:-0.146px;white-space:pre;">Screendump012.jpg</div>
<svg class="a" style="left:613px;top:137px;" width="16" height="16" viewBox="0 0 16 16"><path d="M2.500 .500h8l4 4v10.500h-12z" fill="#dbe6f7" stroke="#7d9bd0"/><path d="M10.500 .500v4h4" fill="#f3f7fd" stroke="#7d9bd0"/><path d="M14.500 5v10M3 14.500h12" stroke="#5f83c4"/><rect x="4" y="4" width="8" height="8" fill="#e07a38"/><rect x="4" y="4" width="8" height="2" fill="#c6502a"/><rect x="6" y="6" width="4" height="3.500" fill="#f6dcae"/><rect x="4" y="10.500" width="8" height="1.500" fill="#b86a3a"/></svg>
<div class="t" style="left:629.85px;top:139.69px;color:#000;font-size:11px;letter-spacing:-0.089px;white-space:pre;">Screendump 01 03-Aug-13.jpg</div>
<svg class="a" style="left:613px;top:154px;" width="16" height="16" viewBox="0 0 16 16"><rect x="6.500" y="7" width="8.500" height="3.500" fill="#8a8a8a"/><rect x="7.500" y="0" width="8.500" height="7.500" fill="#1a1a1a"/><rect x="9" y="1.500" width="5.500" height="4" fill="#e8ecf4"/><path d="M9.500 2l2.300 2 2.300-2z" fill="#222"/><rect x="9" y="4.500" width="5.500" height="1" fill="#222"/><rect x="1.500" y="5" width="4" height="10" fill="#e4e4e4" stroke="#222"/><path d="M3.500 6v8" stroke="#9a9a9a"/><path d="M.5 4.500l2-2M2.500 2.500l1.500 1" stroke="#333" stroke-width=".9" fill="none"/><rect x="5" y="8.500" width="8" height="7" fill="#3a9a44"/><circle cx="9" cy="12" r="2.700" fill="#7ad87a"/><circle cx="9" cy="12" r="1.200" fill="#16451c"/><rect x="7" y="9.500" width="1.500" height="1.500" fill="#e6ffe6"/><path d="M5 15.500h8.500" stroke="#222"/></svg>
<div class="t" style="left:629.85px;top:156.69px;color:#000;font-size:11px;letter-spacing:-0.066px;white-space:pre;">Setup_RoboRealm_v2.55.6.exe</div>
<svg class="a" style="left:613px;top:171px;" width="16" height="16" viewBox="0 0 16 16"><path d="M4.500 .500h9v15h-12v-12z" fill="#fff" stroke="#858585"/><path d="M4.500 .500v3h-3" fill="none" stroke="#858585"/><path d="M.5 14.200c6 0 11.500-3.500 14.500-9.200l1 2.500c-3 5.800-9 9.500-15.500 8.700z" fill="#e6a23a"/><path d="M1 14.800c6 .2 11-3.500 14.300-8.500" fill="none" stroke="#f9dc92" stroke-width="1.100"/></svg>
<div class="t" style="left:630.00px;top:173.69px;color:#000;font-size:11px;letter-spacing:-0.251px;white-space:pre;">simplc.pdf</div>
<svg class="a" style="left:613px;top:188px;" width="16" height="16" viewBox="0 0 16 16"><path d="M.5 3.500v-1.500h5.500l1.500 1.500" fill="#f4eca8" stroke="#4a4414"/><rect x=".5" y="3.500" width="14" height="10" fill="#f4eca8" stroke="#4a4414"/><path d="M1 13.500h13.500v-9.500" fill="none" stroke="#222" stroke-width="1"/><path d="M4.500 2.500v10.500" stroke="#222" stroke-width="2.400" stroke-dasharray="1.300 1"/><path d="M4.500 3v10" stroke="#e8e8e8" stroke-width=".8" stroke-dasharray="1 1.300"/></svg>
<div class="t" style="left:630.00px;top:190.69px;color:#000;font-size:11px;letter-spacing:-0.133px;white-space:pre;">simplc_bootloader.zip</div>
<svg class="a" style="left:613px;top:205px;" width="16" height="16" viewBox="0 0 16 16"><path d="M4.500 .500h9v15h-12v-12z" fill="#fff" stroke="#858585"/><path d="M4.500 .500v3h-3" fill="none" stroke="#858585"/><path d="M.5 14.200c6 0 11.500-3.500 14.500-9.200l1 2.500c-3 5.800-9 9.500-15.500 8.700z" fill="#e6a23a"/><path d="M1 14.800c6 .2 11-3.500 14.300-8.500" fill="none" stroke="#f9dc92" stroke-width="1.100"/></svg>
<div class="t" style="left:630.00px;top:207.69px;color:#000;font-size:11px;letter-spacing:-0.010px;white-space:pre;">std bank  251734811.pdf</div>
<svg class="a" style="left:613px;top:222px;" width="16" height="16" viewBox="0 0 16 16"><path d="M4.500 .500h9v15h-12v-12z" fill="#fff" stroke="#858585"/><path d="M4.500 .500v3h-3" fill="none" stroke="#858585"/><path d="M.5 14.200c6 0 11.500-3.500 14.500-9.200l1 2.500c-3 5.800-9 9.500-15.500 8.700z" fill="#e6a23a"/><path d="M1 14.800c6 .2 11-3.500 14.300-8.500" fill="none" stroke="#f9dc92" stroke-width="1.100"/></svg>
<div class="t" style="left:630.10px;top:224.69px;color:#000;font-size:11px;letter-spacing:-0.205px;white-space:pre;">TPTCM60 Label printer.pdf</div>
<svg class="a" style="left:613px;top:239px;" width="16" height="16" viewBox="0 0 16 16"><path d="M.5 3.500v-1.500h5.500l1.500 1.500" fill="#f4eca8" stroke="#4a4414"/><rect x=".5" y="3.500" width="14" height="10" fill="#f4eca8" stroke="#4a4414"/><path d="M1 13.500h13.500v-9.500" fill="none" stroke="#222" stroke-width="1"/><path d="M4.500 2.500v10.500" stroke="#222" stroke-width="2.400" stroke-dasharray="1.300 1"/><path d="M4.500 3v10" stroke="#e8e8e8" stroke-width=".8" stroke-dasharray="1 1.300"/></svg>
<div class="t" style="left:629.50px;top:241.69px;color:#000;font-size:11px;letter-spacing:-0.294px;white-space:pre;">USB_HID_BootLoader.zip</div>
<div class="a" style="left:398px;top:366px;width:446px;height:16px;background:#e9e7e3;"></div>
<div class="btn" style="left:398px;top:366px;width:16px;height:16px"></div>
<svg class="a" style="left:403px;top:370px" width="4" height="7" viewBox="0 0 4 7"><path d="M4 0v7l-4-3.500z" fill="#000"/></svg>
<div class="btn" style="left:828px;top:366px;width:16px;height:16px"></div>
<svg class="a" style="left:834px;top:370px" width="4" height="7" viewBox="0 0 4 7"><path d="M0 0v7l4-3.500z" fill="#000"/></svg>
<div class="btn" style="left:553px;top:366px;width:275px;height:16px"></div>
<div class="a" style="left:645px;top:338px;width:185px;height:31px;background:#fff;"></div>
<div class="t" style="left:645.30px;top:338.69px;color:#000;font-size:11px;letter-spacing:0.012px;">re-opening same file, now edited</div>
<div class="t" style="left:398.19px;top:399.04px;color:#000;font-size:12px;letter-spacing:0.000px;transform:scaleX(0.8520);transform-origin:0 0;">File name:</div>
<div class="sunk" style="left:492px;top:393px;width:246px;height:22px"></div>
<div class="t" style="left:495.33px;top:399.04px;color:#000;font-size:12px;letter-spacing:0.000px;transform:scaleX(0.8896);transform-origin:0 0;">new test.robo</div>
<div class="btn" style="left:720px;top:395px;width:16px;height:18px"></div><svg class="a" style="left:724px;top:402px" width="7" height="4" viewBox="0 0 7 4"><path d="M0 0h7l-3.500 4z" fill="#000"/></svg>
<div class="t" style="left:398.19px;top:425.04px;color:#000;font-size:12px;letter-spacing:0.000px;transform:scaleX(0.8561);transform-origin:0 0;">Files of type:</div>
<div class="sunk" style="left:492px;top:421px;width:246px;height:21px"></div>
<div class="t" style="left:496.00px;top:426.04px;color:#000;font-size:12px;letter-spacing:0.000px;transform:scaleX(0.8452);transform-origin:0 0;">All Files (*.*)</div>
<div class="btn" style="left:720px;top:423px;width:16px;height:17px"></div><svg class="a" style="left:724px;top:429px" width="7" height="4" viewBox="0 0 7 4"><path d="M0 0h7l-3.500 4z" fill="#000"/></svg>
<div class="a" style="left:771px;top:393px;width:75px;height:23px;background:#000"></div><div class="btn" style="left:772px;top:394px;width:73px;height:21px"></div>
<div class="t" style="left:795.51px;top:398.04px;color:#000;font-size:12px;letter-spacing:0.000px;transform:scaleX(0.8918);transform-origin:0 0;">Open</div>
<div class="btn" style="left:771px;top:419px;width:75px;height:23px"></div>
<div class="t" style="left:792.46px;top:424.04px;color:#000;font-size:12px;letter-spacing:0.000px;transform:scaleX(0.9003);transform-origin:0 0;">Cancel</div>
<div class="a" style="left:396px;top:457px;width:341px;height:126px;box-sizing:border-box;border:1px solid;border-color:#808080 #fff #fff #808080"><div class="a" style="left:0;top:0;right:0;bottom:0;border:1px solid;border-color:#fff #808080 #808080 #fff"></div></div>
<div class="a" style="left:403px;top:455px;width:74px;height:6px;background:#d4d0c8;"></div>
<div class="t" style="left:405.03px;top:451.04px;color:#000;font-size:12px;letter-spacing:0.000px;transform:scaleX(0.8812);transform-origin:0 0;">Image Preview</div>
<div class="t" style="left:462.95px;top:490.04px;color:#000;font-size:12px;letter-spacing:0.000px;transform:scaleX(0.9126);transform-origin:0 0;">Width:</div>
<div class="t" style="left:497.05px;top:489.04px;color:#000;font-size:12px;letter-spacing:0.000px;transform:scaleX(0.9974);transform-origin:0 0;">N/A</div>
<div class="t" style="left:460.16px;top:520.04px;color:#000;font-size:12px;letter-spacing:0.000px;transform:scaleX(0.8892);transform-origin:0 0;">Height:</div>
<div class="t" style="left:497.05px;top:519.04px;color:#000;font-size:12px;letter-spacing:0.000px;transform:scaleX(0.9974);transform-origin:0 0;">N/A</div>
<div class="a" style="left:555px;top:468px;width:139px;height:104px;box-sizing:border-box;border:1px solid;border-color:#808080 #fff #fff #808080"><div class="a" style="left:0;top:0;right:0;bottom:0;border:1px solid;border-color:#404040 #d4d0c8 #d4d0c8 #404040"></div></div>
<div class="sunk" style="left:411px;top:558px;width:13px;height:13px"></div>
<svg class="a" style="left:414px;top:561px" width="7" height="7" viewBox="0 0 7 7"><path d="M0 2v3l2 2 5-5v-3l-5 5z" fill="#000"/></svg>
<div class="t" style="left:429.56px;top:559.04px;color:#000;font-size:12px;letter-spacing:0.000px;transform:scaleX(0.8891);transform-origin:0 0;">Show preview</div>
<svg class="a" style="left:840px;top:584px" width="13" height="13" viewBox="0 0 13 13"><path d="M12 1L1 12M12 5l-7 7M12 9l-3 3" stroke="#808080" stroke-width="1.400"/><path d="M12 0L0 12M12 4l-8 8M12 8l-4 4" stroke="#fff" stroke-width="1"/></svg>
<svg class="a" style="left:560px;top:340px" width="100" height="80" viewBox="560 340 100 80"><path d="M642.700 352.300L576.900 401.100M594.700 373.200L571.600 404.300M571.600 404.300L586.600 404.600L602 405.400" fill="none" stroke="#000" stroke-width="1"/></svg>
</body></html>
